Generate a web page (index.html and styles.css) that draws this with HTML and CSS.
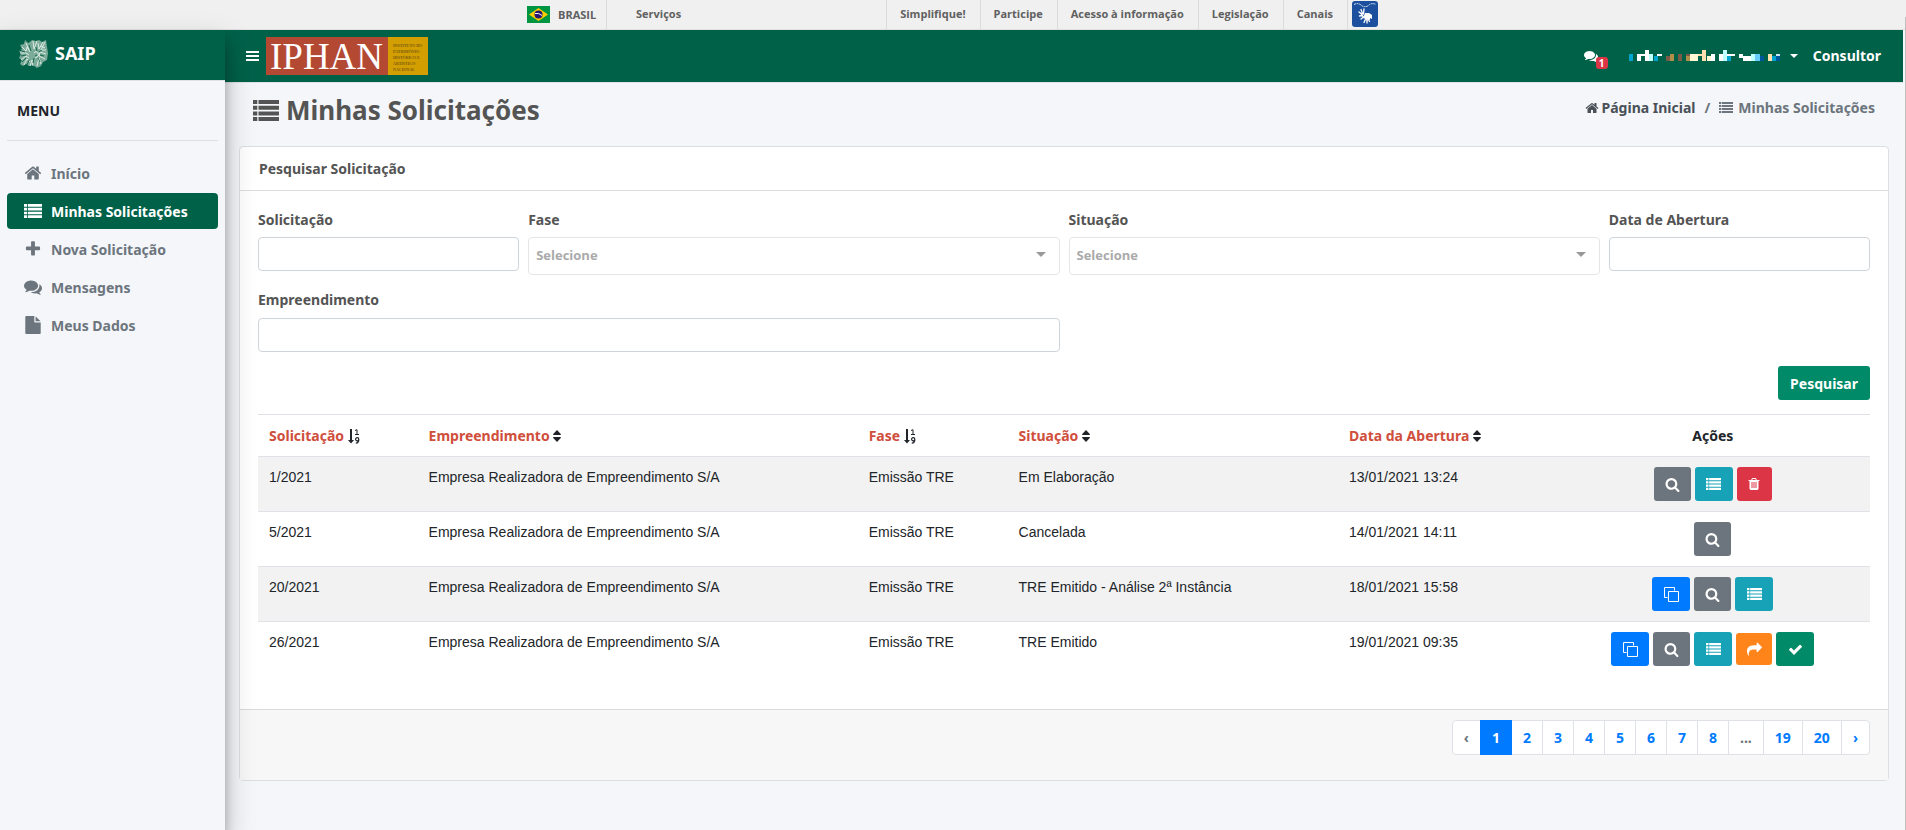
FILE: index.html
```html
<!DOCTYPE html>
<html lang="pt-BR">
<head>
<meta charset="utf-8">
<meta name="viewport" content="width=device-width, initial-scale=1">
<title>SAIP - Minhas Solicitações</title>
<link rel="stylesheet" href="styles.css">
</head>
<body>
<svg class="sprite" aria-hidden="true">
  <symbol id="i-search" viewBox="0 0 1792 1792"><path d="M1216 832q0-185-131.500-316.500t-316.500-131.500-316.500 131.500-131.500 316.500 131.500 316.500 316.500 131.500 316.500-131.500 131.500-316.500zm512 832q0 52-38 90t-90 38q-54 0-90-38l-343-342q-179 124-399 124-143 0-273.500-55.500t-225-150-150-225-55.500-273.500 55.500-273.500 150-225 225-150 273.500-55.500 273.500 55.500 225 150 150 225 55.500 273.500q0 220-124 399l343 343q37 37 37 90z"/></symbol>
  <symbol id="i-home" viewBox="0 0 1792 1792"><path d="M1472 992v480q0 26-19 45t-45 19h-384v-384h-256v384h-384q-26 0-45-19t-19-45v-480q0-1 .5-3t.5-3l575-474 575 474q1 2 1 6zm223-69l-62 74q-8 9-21 11h-3q-13 0-21-7l-692-577-692 577q-12 8-24 7-13-2-21-11l-62-74q-8-10-7-23.500t11-21.500l719-599q32-26 76-26t76 26l244 204v-195q0-14 9-23t23-9h192q14 0 23 9t9 23v408l219 182q10 8 11 21.500t-7 23.500z"/></symbol>
  <symbol id="i-check" viewBox="0 0 1792 1792"><path d="M1671 566q0 40-28 68l-724 724-136 136q-28 28-68 28t-68-28l-136-136-362-362q-28-28-28-68t28-68l136-136q28-28 68-28t68 28l294 295 656-657q28-28 68-28t68 28l136 136q28 28 28 68z"/></symbol>
  <symbol id="i-plus" viewBox="0 0 1792 1792"><path d="M1600 736v192q0 40-28 68t-68 28h-416v416q0 40-28 68t-68 28h-192q-40 0-68-28t-28-68v-416h-416q-40 0-68-28t-28-68v-192q0-40 28-68t68-28h416v-416q0-40 28-68t68-28h192q40 0 68 28t28 68v416h416q40 0 68 28t28 68z"/></symbol>
  <symbol id="i-comments" viewBox="0 0 1792 1792"><path d="M1408 768q0 139-94 257t-256.500 186.500-353.500 68.500q-86 0-176-16-124 88-278 128-36 9-86 16h-3q-11 0-20.500-8t-11.500-21q-1-3-1-6.500t.5-6.500 2-6l2.500-5 3.500-5.500 4-5 4.500-5 4-4.500q5-6 23-25t26-29.500 22.500-29 25-38.500 20.500-44q-124-72-195-177t-71-224q0-139 94-257t256.500-186.500 353.500-68.500 353.500 68.500 256.500 186.500 94 257zm384 256q0 120-71 224.500t-195 176.500q10 24 20.500 44t25 38.500 22.500 29 26 29.500 23 25q1 1 4 4.500t4.500 5 4 5 3.500 5.500l2.500 5 2 6 .5 6.500-1 6.500q-3 14-13 22t-22 7q-50-7-86-16-154-40-278-128-90 16-176 16-271 0-472-132 58 4 88 4 161 0 309-45t264-129q125-92 192-212t67-254q0-77-23-152 129 71 204 178t75 230z"/></symbol>
  <symbol id="i-file" viewBox="0 0 1792 1792"><path d="M1152 512v-472q22 14 36 28l408 408q14 14 28 36h-472zm-128 32q0 40 28 68t68 28h544v1056q0 40-28 68t-68 28h-1344q-40 0-68-28t-28-68v-1600q0-40 28-68t68-28h800v544z"/></symbol>
  <symbol id="i-share" viewBox="0 0 1792 1792"><path d="M1792 640q0 26-19 45l-512 512q-19 19-45 19t-45-19-19-45v-256h-224q-98 0-175.500 6t-154 21.500-133 42.500-105.500 69.500-80 101-48.500 138.500-17.500 181q0 55 5 123 0 6 2.500 23.500t2.500 26.500q0 15-8.500 25t-23.500 10q-16 0-28-17-7-9-13-22t-13.500-30-10.500-24q-127-285-127-451 0-199 53-333 162-403 875-403h224v-256q0-26 19-45t45-19 45 19l512 512q19 19 19 45z"/></symbol>
  <symbol id="i-trash" viewBox="0 0 1792 1792"><path d="M704 1376v-704q0-14-9-23t-23-9h-64q-14 0-23 9t-9 23v704q0 14 9 23t23 9h64q14 0 23-9t9-23zm256 0v-704q0-14-9-23t-23-9h-64q-14 0-23 9t-9 23v704q0 14 9 23t23 9h64q14 0 23-9t9-23zm256 0v-704q0-14-9-23t-23-9h-64q-14 0-23 9t-9 23v704q0 14 9 23t23 9h64q14 0 23-9t9-23zm-544-992h448l-48-117q-7-9-17-11h-317q-10 2-17 11zm928 32v64q0 14-9 23t-23 9h-96v948q0 83-47 143.500t-113 60.500h-832q-66 0-113-58.500t-47-141.500v-952h-96q-14 0-23-9t-9-23v-64q0-14 9-23t23-9h309l70-167q15-37 54-63t79-26h320q40 0 79 26t54 63l70 167h309q14 0 23 9t9 23z"/></symbol>
  <symbol id="i-list" viewBox="0 0 26 22" preserveAspectRatio="none"><path d="M0 0h4.300v4.200H0zM5.500 0H26v4.200H5.500zM0 6h4.300v4.200H0zM5.500 6H26v4.200H5.500zM0 12h4.300v4.200H0zM5.500 12H26v4.200H5.500zM0 17.800h4.300V22H0zM5.500 17.800H26V22H5.500z"/></symbol>
  <symbol id="i-copy" viewBox="0 0 15 15"><path fill="none" stroke="currentColor" d="M3.500 10.500h-3v-10h10v3M4.500 4.500h10v10h-10z"/></symbol>
  <symbol id="i-sort" viewBox="0 0 8 12"><path d="M4 0l4 4.200q0 .8-.8.800H.8Q0 5 0 4.200zM4 12l4-4.200q0-.8-.8-.8H.8Q0 7 0 7.800z"/></symbol>
  <symbol id="i-sortnum" viewBox="0 0 12 15"><path d="M2 0h2v11h2l-3 3.500L0 11h2z"/><path fill="none" stroke="currentColor" d="M7 1.500l2-.8v4.800M7 5.500h4"/><path fill="none" stroke="currentColor" stroke-width="1.200" d="M10.800 10.200a1.600 1.600 0 1 1-3.200 0a1.600 1.600 0 1 1 3.200 0q.2 3.600-3 4"/></symbol>
</svg>

<header class="govbar">
  <nav class="govbar-inner" aria-label="Governo Federal">
    <a class="gov-brasil" href="#">
      <svg width="23" height="17" viewBox="0 0 23 17" aria-hidden="true"><path fill="#009540" d="M0 0h23v17H0z"/><path fill="#fc0" d="M11.500 2L21 8.500 11.500 15 2 8.500z"/><circle cx="11.500" cy="8.500" r="4" fill="#28166f"/><path fill="none" stroke="#fff" d="M8 7.500q4-.8 7 2"/></svg>
      BRASIL</a>
    <a class="gov-services" href="#">Serviços</a>
    <div class="gov-links">
      <a href="#">Simplifique!</a><a href="#">Participe</a><a href="#">Acesso à informação</a><a href="#">Legislação</a><a href="#">Canais</a>
      <a class="gov-libras" href="#" aria-label="Libras">
        <svg width="26" height="26" viewBox="0 0 26 26" aria-hidden="true"><rect width="26" height="26" rx="3" fill="#1c509e"/><path fill="none" stroke="#fff" stroke-width=".8" stroke-dasharray="2 .6" d="M2 3.500q4-2 7 .5 2 2 4 1.500 2 .5 4-1.500 3-2.500 7-.5"/><path fill="#fff" d="M13 12l4 0 3 2v4l-2-1v2l-2-1-1 3-1-3-3-1z"/><path fill="none" stroke="#fff" stroke-width="1.300" stroke-linecap="round" d="M9 8.500l1.500 4M12 8l-.5 5M7 11l3 2.500M7.500 15l3-.5M9 18l2.500-2M12 21.500l1.500-3.500M15 22l0-3M17.500 20.500l-1-2M9.500 13.500l1.500 2"/></svg>
      </a>
    </div>
  </nav>
</header>

<div class="shell">
  <aside class="sidebar">
    <a class="brand" href="#">
      <svg width="29" height="29" viewBox="0 0 29 29" aria-hidden="true">
        <path fill="#7dab99" d="M13 1l4 1 3-1 3 2 4-2 1 7 1 6-1 7-4 2-2 4-4 2-4-3-4 1-3-2-3 2-3-2 2-4-3-2 2-4-2-3 3-2-2-4 4-1 1-4 3 3 2-1z"/>
        <path fill="none" stroke="#e6f2ed" stroke-width=".9" d="M3 8l4 4 1-4 3 5M1 14l6 0 3 2M2 21l5-4 3 2M5 26l3-6 3 3M11 27l2-6 1 6M7 4l3 7M14 2l1 8 3-8M19 4l1 6 4-7M26 3l-4 8 5 0M27 15l-6-2-1 4 6 3M22 25l-2-6-2 8M15 14q2-3 4 0t-3 5M22 7l4 2"/>
        <path fill="none" stroke="#0a6248" stroke-width=".9" d="M0 11l6 2M2 17l5-1M3 23l4-4M8 26l2-5M14 24l1-5M10 6l2 6M17 8l1 4M23 11l-3 2M25 17l-4-1M21 23l-2-4M16 17l2-1"/>
      </svg>
      SAIP</a>
    <nav class="menu" aria-label="Menu">
      <h2 class="menu-title">MENU</h2>
      <a href="#"><svg class="ic"><use href="#i-home"/></svg>Início</a>
      <a class="active" href="#" aria-current="page"><svg class="ic ic-rows"><use href="#i-list"/></svg>Minhas Solicitações</a>
      <a href="#"><svg class="ic"><use href="#i-plus"/></svg>Nova Solicitação</a>
      <a href="#"><svg class="ic"><use href="#i-comments"/></svg>Mensagens</a>
      <a href="#"><svg class="ic"><use href="#i-file"/></svg>Meus Dados</a>
    </nav>
  </aside>

  <div class="content">
    <header class="navbar">
      <button class="toggle" type="button" aria-label="Alternar menu"><svg width="13" height="10" viewBox="0 0 13 10"><path d="M0 0h13v2H0zM0 4h13v2H0zM0 8h13v2H0z"/></svg></button>
      <a class="logo" href="#" aria-label="IPHAN">
        <svg width="162" height="38" viewBox="0 0 162 38">
          <path fill="#b34933" d="M0 0h122v38H0z"/><path fill="#d39e00" d="M122 0h40v38h-40z"/>
          <text class="logo-name" x="4" y="32">IPHAN</text>
          <g class="logo-sub"><text x="127" y="10">INSTITUTO DO</text><text x="127" y="16">PATRIMÔNIO</text><text x="127" y="22">HISTÓRICO E</text><text x="127" y="28">ARTÍSTICO</text><text x="127" y="34">NACIONAL</text></g>
        </svg>
      </a>
      <div class="user">
        <a class="inbox" href="#" aria-label="Mensagens"><svg class="ic"><use href="#i-comments"/></svg><span class="badge">1</span></a>
        <button class="account" type="button" aria-label="Conta do usuário">
          <svg width="152" height="12" viewBox="0 0 152 12" shape-rendering="crispEdges">
            <path fill="#fff" d="M8 4h8v2h-4v5H8zM16 0h4v11h-4zM28 4h5v2h-5zM65 4h4v7h-4zM82 4h4v7h-4zM90 4h4v7h-4zM98 4h8v2h-8zM110 4h4v4h-4zM114 6h8v5h-8z"/>
            <path fill="#bfffff" d="M20 4h4v7h-4zM94 0h4v11h-4zM122 4h4v7h-4z"/>
            <path fill="#00a5cf" d="M0 4h4v7H0zM25 6h4v5h-4zM98 6h4v5h-4zM143 6h4v5h-4z"/>
            <path fill="#fff8d5" d="M61 4h8v7h-8zM78 6h4v5h-4z"/><path fill="#ffe1b0" d="M69 4h4v2h-4zM73 0h4v11h-4zM139 4h4v7h-4z"/>
            <path fill="#b28f48" d="M41 4h4v7h-4zM57 6h4v5h-4z"/><path fill="#7a5b49" d="M37 6h4v5h-4zM49 4h4v7h-4zM57 4h4v2h-4z"/>
            <path fill="#66ccff" d="M126 4h5v7h-5z"/><path fill="#00569b" d="M131 6h4v5h-4zM147 6h4v5h-4z"/><path fill="#c8e6f5" d="M147 4h4v2h-4z"/>
          </svg>
          <i class="caret"></i>
        </button>
        <span>Consultor</span>
      </div>
    </header>

    <div class="page-head">
      <h1><svg class="ic"><use href="#i-list"/></svg>Minhas Solicitações</h1>
      <nav class="crumbs" aria-label="Localização">
        <a href="#"><svg class="ic"><use href="#i-home"/></svg>Página Inicial</a><span>/</span><span><svg class="ic-list"><use href="#i-list"/></svg>Minhas Solicitações</span>
      </nav>
    </div>

    <main class="card">
      <h2 class="card-head">Pesquisar Solicitação</h2>
      <div class="card-body">
        <form class="filters">
          <div class="field w2"><label for="f-sol">Solicitação</label><input id="f-sol" type="text"></div>
          <div class="field w4"><label for="f-fase">Fase</label><div class="picker"><select id="f-fase"><option>Selecione</option></select></div></div>
          <div class="field w4"><label for="f-sit">Situação</label><div class="picker"><select id="f-sit"><option>Selecione</option></select></div></div>
          <div class="field w2"><label for="f-data">Data de Abertura</label><input id="f-data" type="text"></div>
          <div class="field w6"><label for="f-emp">Empreendimento</label><input id="f-emp" type="text"></div>
          <div class="submit"><button class="btn green" type="button">Pesquisar</button></div>
        </form>

        <table class="grid">
          <colgroup><col class="c1"><col class="c2"><col class="c3"><col class="c4"><col class="c5"><col></colgroup>
          <thead><tr>
            <th><a href="#">Solicitação</a> <svg class="num"><use href="#i-sortnum"/></svg></th>
            <th><a href="#">Empreendimento</a> <svg class="sort"><use href="#i-sort"/></svg></th>
            <th><a href="#">Fase</a> <svg class="num"><use href="#i-sortnum"/></svg></th>
            <th><a href="#">Situação</a> <svg class="sort"><use href="#i-sort"/></svg></th>
            <th><a href="#">Data da Abertura</a> <svg class="sort"><use href="#i-sort"/></svg></th>
            <th class="acts-head">Ações</th>
          </tr></thead>
          <tbody>
            <tr><td>1/2021</td><td>Empresa Realizadora de Empreendimento S/A</td><td>Emissão TRE</td><td>Em Elaboração</td><td>13/01/2021 13:24</td>
              <td><div class="acts"><button class="btn gray" aria-label="Visualizar"><svg><use href="#i-search"/></svg></button><button class="btn teal" aria-label="Detalhes"><svg><use href="#i-list"/></svg></button><button class="btn red" aria-label="Excluir"><svg><use href="#i-trash"/></svg></button></div></td></tr>
            <tr><td>5/2021</td><td>Empresa Realizadora de Empreendimento S/A</td><td>Emissão TRE</td><td>Cancelada</td><td>14/01/2021 14:11</td>
              <td><div class="acts"><button class="btn gray" aria-label="Visualizar"><svg><use href="#i-search"/></svg></button></div></td></tr>
            <tr><td>20/2021</td><td>Empresa Realizadora de Empreendimento S/A</td><td>Emissão TRE</td><td>TRE Emitido - Análise 2ª Instância</td><td>18/01/2021 15:58</td>
              <td><div class="acts"><button class="btn blue" aria-label="Copiar"><svg><use href="#i-copy"/></svg></button><button class="btn gray" aria-label="Visualizar"><svg><use href="#i-search"/></svg></button><button class="btn teal" aria-label="Detalhes"><svg><use href="#i-list"/></svg></button></div></td></tr>
            <tr><td>26/2021</td><td>Empresa Realizadora de Empreendimento S/A</td><td>Emissão TRE</td><td>TRE Emitido</td><td>19/01/2021 09:35</td>
              <td><div class="acts"><button class="btn blue" aria-label="Copiar"><svg><use href="#i-copy"/></svg></button><button class="btn gray" aria-label="Visualizar"><svg><use href="#i-search"/></svg></button><button class="btn teal" aria-label="Detalhes"><svg><use href="#i-list"/></svg></button><button class="btn orange" aria-label="Encaminhar"><svg><use href="#i-share"/></svg></button><button class="btn green" aria-label="Aprovar"><svg><use href="#i-check"/></svg></button></div></td></tr>
          </tbody>
        </table>
      </div>
      <footer class="card-foot">
        <nav class="pages" aria-label="Paginação">
          <span class="off">‹</span><a class="on" href="#">1</a><a href="#">2</a><a href="#">3</a><a href="#">4</a><a href="#">5</a><a href="#">6</a><a href="#">7</a><a href="#">8</a><span class="off">...</span><a href="#">19</a><a href="#">20</a><a href="#">›</a>
        </nav>
      </footer>
    </main>
  </div>
</div>
</body>
</html>
```
FILE: styles.css
```css
*, *::before, *::after { box-sizing: border-box; }

body {
  margin: 0;
  min-height: 100vh;
  display: flex;
  flex-direction: column;
  background: #f4f6f9;
  color: #212529;
  font: 700 14px/21px "Noto Sans", "Open Sans", sans-serif;
}

/* thin rail along the right edge of the window */
body::after {
  content: "";
  position: fixed;
  top: 17px;
  right: 0;
  bottom: 0;
  width: 1px;
  background: #c0c0c0;
}

a { color: inherit; text-decoration: none; }
h1, h2 { margin: 0; font-size: 14px; font-weight: 700; }
svg { fill: currentColor; flex: none; }
button { font: inherit; cursor: pointer; }
.sprite { display: none; }
.ic { width: 14px; height: 14px; }

/* government bar */
.govbar {
  height: 30px;
  background: #f0f0f0;
  border-bottom: 1px solid #dfdfdf;
  color: #606060;
  font: 700 11px/27px "Open Sans", sans-serif;
}
.govbar-inner { display: flex; max-width: 852px; height: 29px; margin: 0 auto; padding-right: 1px; }
.gov-brasil {
  display: flex;
  align-items: center;
  gap: 8px;
  width: 80px;
  border-right: 1px solid #dcdcdc;
}
.gov-services { padding-left: 29px; }
.gov-links { display: flex; margin-left: auto; border-left: 1px solid #dcdcdc; }
.gov-links a { padding: 0 14px 0 13px; border-right: 1px solid #dcdcdc; }
.gov-links .gov-libras { padding: 1px 0 0 4px; border: 0; line-height: 0; }

/* shell */
.shell { display: flex; flex: 1; margin-right: 3px; }
.sidebar {
  position: relative;
  z-index: 2;
  width: 225px;
  flex: none;
  box-shadow: 0 14px 28px rgba(0, 0, 0, .25), 0 10px 10px rgba(0, 0, 0, .22);
  background: #f4f6f9;
}
.brand {
  display: flex;
  align-items: center;
  gap: 7px;
  height: 51px;
  padding: 0 19px 3px;
  background: #006149;
  border-bottom: 1px solid #dee2e6;
  color: #fff;
  font-size: 18px;
}
.menu { display: flex; flex-direction: column; gap: 2px; padding: 0 7px; }
.menu-title {
  padding: 19px 10px;
  margin-bottom: 12px;
  border-bottom: 1px solid #dcdfe3;
}
.menu a {
  display: flex;
  align-items: center;
  gap: 9px;
  height: 36px;
  padding: 0 17px;
  border-radius: 4px;
  color: #6c757d;
}
.menu .ic { width: 18px; height: 18px; }
.menu .ic-rows { height: 14px; }
.menu .active { background: #006149; color: #fff; }

.content { flex: 1; min-width: 0; }
.navbar {
  display: flex;
  align-items: center;
  height: 53px;
  padding: 0 22px 0 21px;
  background: #006149;
  border-bottom: 1px solid #dee2e6;
  color: #fff;
}
.toggle { padding: 0; border: 0; background: none; color: inherit; line-height: 0; }
.logo { margin-left: 7px; line-height: 0; }
.logo svg { overflow: visible; }
.logo-name { font: 400 37px "Liberation Serif", serif; fill: #fff; }
.logo-sub { font: 700 4px "Liberation Serif", serif; fill: #7a5c10; }
.user { display: flex; align-items: center; gap: 15px; margin-left: auto; padding-bottom: 1px; }
.inbox { position: relative; line-height: 0; margin-right: 16px; }
.badge {
  position: absolute;
  left: 12px;
  top: 8px;
  padding: 0 3px;
  border-radius: 3px;
  background: #dc3545;
  font-size: 10px;
  line-height: 12px;
}
.account {
  display: flex;
  align-items: center;
  gap: 9px;
  padding: 0;
  border: 0;
  background: none;
  color: inherit;
}
.caret { border: 4px solid transparent; border-top-color: #fff; border-bottom: 0; }

.page-head {
  display: flex;
  justify-content: space-between;
  padding: 12px 28px 21px;
  color: #545454;
}
h1 { display: flex; align-items: center; gap: 7px; font-size: 26px; line-height: 30px; }
h1 .ic { width: 26px; height: 21px; }
.crumbs { display: flex; gap: 9px; padding-top: 2px; color: #6c757d; }
.crumbs a { color: #495057; }
.crumbs .ic { margin-right: 3px; vertical-align: -2px; }
.ic-list { width: 14px; height: 11px; margin-right: 5px; }

/* card */
.card {
  margin: 0 14px;
  border: 1px solid #dcdfe2;
  border-radius: 4px;
  background: #fff;
}
.card-head { padding: 11px 19px; border-bottom: 1px solid #dcdfe2; color: #545454; }
.card-body { padding: 18px 18px 33px; }
.filters {
  display: grid;
  grid-template-columns: repeat(12, minmax(0, 1fr));
  gap: 14px 9px;
  color: #545454;
}
.field { display: flex; flex-direction: column; gap: 7px; }
.w2 { grid-column: span 2; }
.w4 { grid-column: span 4; }
.w6 { grid-column: span 6; gap: 8px; }
.field input {
  height: 34px;
  padding: 0 10px;
  border: 1px solid #ced4da;
  border-radius: 4px;
  font: inherit;
}
.picker { position: relative; }
.picker::after {
  content: "";
  position: absolute;
  right: 14px;
  top: 15px;
  border: 5px solid transparent;
  border-top-color: #999;
  border-bottom: 0;
  pointer-events: none;
}
.picker select {
  appearance: none;
  width: 100%;
  height: 38px;
  padding: 0 7px 2px;
  border: 1px solid #e4e6e8;
  border-radius: 4px;
  background: #fff;
  color: #aaa;
  font: 700 13px "Open Sans", sans-serif;
}
.submit { grid-column: 1 / -1; text-align: right; line-height: 0; }
.btn {
  height: 34px;
  padding: 0 12px;
  border: 0;
  border-radius: 3px;
  color: #fff;
  line-height: 21px;
}
.green { background: #008a68; }
.gray { background: #6c757d; }
.teal { background: #17a2b8; }
.red { background: #dc3545; }
.blue { background: #007bff; }
.orange { background: #ff851b; }

/* results */
.grid { width: 100%; margin-top: 14px; border-collapse: collapse; table-layout: fixed; }
.c1 { width: 9.9%; }
.c2 { width: 27.3%; }
.c3 { width: 9.3%; }
.c4 { width: 20.5%; }
.c5 { width: 13.5%; }
.grid th, .grid td { padding: 10px 11px; border-top: 1px solid #dee2e6; text-align: left; vertical-align: top; }
.grid th { white-space: nowrap; }
.grid th a { color: #d04e3c; }
.grid .acts-head { text-align: center; }
.grid td { font-family: "Liberation Sans", Arial, sans-serif; font-weight: 400; }
.grid tbody tr:nth-child(odd) { background: #f2f2f2; }
.num { width: 12px; height: 15px; vertical-align: -3px; }
.sort { width: 8px; height: 12px; vertical-align: -1px; }
.acts { display: flex; align-items: center; justify-content: center; gap: 4px; }
.acts .btn { display: flex; align-items: center; justify-content: center; width: 37px; padding: 0; }
.acts .blue, .acts .teal, .acts .green { width: 38px; }
.acts .red { width: 35px; }
.acts .orange { width: 36px; height: 32px; }
.acts svg { width: 15px; height: 15px; }
.acts .teal svg { height: 12px; }
.acts .red svg { width: 14px; height: 14px; }

.card-foot { padding: 10px 18px 25px; border-top: 1px solid #d8dadd; background: #f7f7f7; }
.pages { display: flex; justify-content: flex-end; color: #007bff; }
.pages > * {
  height: 35px;
  padding: 0 11px;
  margin-left: -1px;
  border: 1px solid #dee2e6;
  background: #fff;
  line-height: 33px;
}
.pages > :first-child { border-radius: 4px 0 0 4px; }
.pages > :last-child { border-radius: 0 4px 4px 0; }
.pages .off { color: #6c757d; }
.pages .on { background: #007bff; border-color: #007bff; color: #fff; z-index: 1; }
```
